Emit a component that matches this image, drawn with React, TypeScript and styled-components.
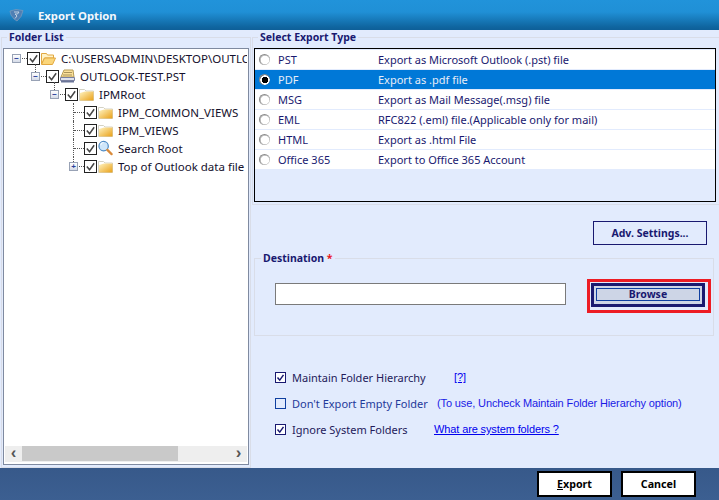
import * as React from "react";
import styled, { createGlobalStyle } from "styled-components";

const ui = `"Noto Sans", "Liberation Sans", sans-serif`;
const link = `"Liberation Sans", sans-serif`;

const GlobalStyle = createGlobalStyle`
  html, body { margin: 0; padding: 0; background: #e2ebfd; }
  body { font-family: ${ui}; font-size: 11px; }
`;

type TreeItem = {
  label: string;
  depth: number;
  icon: "open" | "pst" | "folder" | "search";
  expander?: "minus" | "plus";
  guide?: "stub" | "full" | "half";
};

const treeItems: TreeItem[] = [
  { label: "C:\\USERS\\ADMIN\\DESKTOP\\OUTLOOK-TEST", depth: 0, icon: "open", expander: "minus" },
  { label: "OUTLOOK-TEST.PST", depth: 1, icon: "pst", expander: "minus", guide: "stub" },
  { label: "IPMRoot", depth: 2, icon: "folder", expander: "minus", guide: "stub" },
  { label: "IPM_COMMON_VIEWS", depth: 3, icon: "folder", guide: "full" },
  { label: "IPM_VIEWS", depth: 3, icon: "folder", guide: "full" },
  { label: "Search Root", depth: 3, icon: "search", guide: "full" },
  { label: "Top of Outlook data file", depth: 3, icon: "folder", expander: "plus", guide: "half" },
];

const exportTypes = [
  { name: "PST", desc: "Export as Microsoft Outlook (.pst) file" },
  { name: "PDF", desc: "Export as .pdf file", selected: true },
  { name: "MSG", desc: "Export as Mail Message(.msg) file" },
  { name: "EML", desc: "RFC822 (.eml) file.(Applicable only for mail)" },
  { name: "HTML", desc: "Export as .html File" },
  { name: "Office 365", desc: "Export to Office 365 Account" },
];

const FolderIcon = ({ open }: { open?: boolean }) => (
  <svg width="15" height="13" viewBox="0 0 15 13">
    <defs>
      <linearGradient id="folderFill" x1="0" y1="0" x2="1" y2="1">
        <stop offset="0" stopColor="#fff3c0" />
        <stop offset="1" stopColor="#e9a017" />
      </linearGradient>
    </defs>
    {open ? (
      <>
        <path d="M.5 1.500h5l1 1.500h6v3h-9l-3 6z" fill="#fff3c8" stroke="#e2a840" />
        <path d="M.5 12.500l3-6.500h11l-3 6.500z" fill="#fbd67a" stroke="#e2a840" />
      </>
    ) : (
      <>
        <path d="M.5 1.500h5l1.500 1.500h7.500v9.500h-14z" fill="#fff" stroke="#d4d2c4" />
        <path d="M1 5l5-1.500h8.500v9h-13.500z" fill="url(#folderFill)" />
      </>
    )}
  </svg>
);

const PstIcon = () => (
  <svg width="15" height="16" viewBox="0 0 15 16">
    <path d="M1 9l3-7h9l1 7z" fill="#fbe09a" stroke="#b59a55" />
    <path d="M4 4.500h8M3 7h9" stroke="#a8925a" />
    <path d="M.5 9.500h14v3h-14z" fill="#dfe2ec" stroke="#7a80a0" />
    <path d="M1 13h13v1.500h-13z" fill="#6a7598" />
  </svg>
);

const SearchIcon = () => (
  <svg width="16" height="16" viewBox="0 0 16 16">
    <circle cx="6" cy="6" r="5" fill="#cfe6fa" stroke="#4d8ac4" strokeWidth="1.300" />
    <path d="M3 5a3 3 0 0 1 3-3" stroke="#fff" fill="none" />
    <path d="M10 10l4.500 4.500" stroke="#d98a3a" strokeWidth="2.400" strokeLinecap="round" />
  </svg>
);

const TreeIcon = ({ kind }: { kind: TreeItem["icon"] }) => {
  if (kind === "pst") return <PstIcon />;
  if (kind === "search") return <SearchIcon />;
  return <FolderIcon open={kind === "open"} />;
};

const CheckMark = ({ size, color, weight }: { size: number; color: string; weight: number }) => (
  <svg width={size} height={size} viewBox="0 0 12 12">
    <path d="M2 6l3 3.500 5-7" fill="none" stroke={color} strokeWidth={weight} />
  </svg>
);

const AppLogo = () => (
  <svg width="15" height="13" viewBox="0 0 15 13">
    <path d="M1 2l6-1.500 7 1-2 6-4 4.500-3-2-3-4z" fill="#4f7fb4" stroke="#7f9cbc" strokeWidth=".7" />
    <path d="M5 3h5l-1.500 2h-2.500l2 2-2 2.500" fill="none" stroke="#c3d2e2" strokeWidth="1" />
  </svg>
);

const App = () => (
  <Window>
    <GlobalStyle />
    <TitleBar>
      <AppLogo />
      <TitleText>Export Option</TitleText>
    </TitleBar>
    <Main>
      <FolderPanel>
        <InsetLegend>Folder List</InsetLegend>
        <TreeFrame>
          <Tree>
            {treeItems.map((item) => (
              <TreeRow key={item.label} $depth={item.depth}>
                <ExpanderSlot $guide={item.guide}>
                  {item.expander && (
                    <Expander>
                      <ExpanderGlyph>{item.expander === "plus" ? "+" : "−"}</ExpanderGlyph>
                    </Expander>
                  )}
                </ExpanderSlot>
                <TreeCheck>
                  <CheckMark size={11} color="#444" weight={1.6} />
                </TreeCheck>
                <TreeIconSlot>
                  <TreeIcon kind={item.icon} />
                </TreeIconSlot>
                <TreeLabel>{item.label}</TreeLabel>
              </TreeRow>
            ))}
          </Tree>
          <ScrollBar>
            <ScrollArrow>‹</ScrollArrow>
            <ScrollTrack>
              <ScrollThumb />
            </ScrollTrack>
            <ScrollArrow>›</ScrollArrow>
          </ScrollBar>
        </TreeFrame>
      </FolderPanel>
      <RightColumn>
        <TypePanel>
          <InsetLegend>Select Export Type</InsetLegend>
          <TypeList>
            {exportTypes.map((type) => (
              <TypeRow key={type.name} $selected={type.selected}>
                <Radio $selected={type.selected} />
                <TypeName>{type.name}</TypeName>
                <span>{type.desc}</span>
              </TypeRow>
            ))}
          </TypeList>
        </TypePanel>
        <AdvRow>
          <AdvButton>Adv. Settings...</AdvButton>
        </AdvRow>
        <DestinationPanel>
          <PanelLegend>
            Destination <Required>*</Required>
          </PanelLegend>
          <DestinationRow>
            <PathInput readOnly />
            <BrowseHighlight>
              <BrowseButton>
                <BrowseInner>Browse</BrowseInner>
              </BrowseButton>
            </BrowseHighlight>
          </DestinationRow>
        </DestinationPanel>
        <Options>
          <OptionRow>
            <OptionBox $checked>
              <CheckMark size={9} color="#191970" weight={2} />
            </OptionBox>
            <OptionLabel $width={162}>Maintain Folder Hierarchy</OptionLabel>
            <HelpLink>[?]</HelpLink>
          </OptionRow>
          <OptionRow>
            <OptionBox />
            <OptionLabel $width={145} $muted>Don't Export Empty Folder</OptionLabel>
            <Hint>(To use, Uncheck Maintain Folder Hierarchy option)</Hint>
          </OptionRow>
          <OptionRow>
            <OptionBox $checked>
              <CheckMark size={9} color="#191970" weight={2} />
            </OptionBox>
            <OptionLabel $width={142}>Ignore System Folders</OptionLabel>
            <HelpLink>What are system folders ?</HelpLink>
          </OptionRow>
        </Options>
      </RightColumn>
    </Main>
    <Footer>
      <FooterButton>
        <u>E</u>xport
      </FooterButton>
      <FooterButton>Cancel</FooterButton>
    </Footer>
  </Window>
);

const Window = styled.div`
  width: 719px;
  height: 500px;
  display: flex;
  flex-direction: column;
  overflow: hidden;
  background: #e2ebfd;
  color: #191970;
`;

const TitleBar = styled.header`
  height: 30px;
  flex: none;
  display: flex;
  align-items: center;
  gap: 14px;
  padding-left: 9px;
  background: linear-gradient(#2193da 0%, #2090d6 40%, #0f659f 90%, #0e5f98 100%);
`;

const TitleText = styled.h1`
  margin: 0;
  font: 700 11.3px ${ui};
  color: #f2f8fd;
`;

const Main = styled.main`
  flex: 1;
  min-height: 0;
  display: flex;
  padding-left: 1px;
  gap: 1px;
`;

const Panel = styled.fieldset`
  margin: 0;
  padding: 0;
  min-width: 0;
  box-sizing: border-box;
  border: 1px solid #d9dde8;
`;

const PanelLegend = styled.legend`
  margin-left: 6px;
  padding: 0 2px;
  font: 700 10.5px/14px ${ui};
  color: #191970;
`;

const InsetLegend = styled(PanelLegend)`
  margin-left: 4px;
`;

const FolderPanel = styled(Panel)`
  width: 250px;
  flex: none;
  padding: 4px 1px 2px;
`;

const TreeFrame = styled.div`
  height: 417px;
  box-sizing: border-box;
  display: flex;
  flex-direction: column;
  border: 1px solid #7f8aa0;
  background: #fff;
  padding: 0 1px 2px;
`;

const Tree = styled.div`
  flex: 1;
  min-height: 0;
  overflow: hidden;
  padding-left: 7px;
`;

const TreeRow = styled.div<{ $depth: number }>`
  height: 18px;
  display: flex;
  align-items: center;
  padding-left: ${(p) => p.$depth * 19}px;
  white-space: nowrap;
`;

const guideHeights = { stub: "top: -3px; height: 12px;", full: "top: 0; height: 18px;", half: "top: 0; height: 9px;" };

const ExpanderSlot = styled.span<{ $guide?: "stub" | "full" | "half" }>`
  position: relative;
  width: 15px;
  height: 18px;
  flex: none;
  display: flex;
  align-items: center;

  &::before {
    content: "";
    position: absolute;
    left: 4px;
    border-left: 1px dotted #555;
    ${(p) => (p.$guide ? guideHeights[p.$guide] : "display: none;")}
  }

  &::after {
    content: "";
    position: absolute;
    left: 5px;
    right: 0;
    top: 9px;
    border-top: 1px dotted #555;
  }
`;

const Expander = styled.span`
  position: relative;
  z-index: 1;
  width: 9px;
  height: 9px;
  box-sizing: border-box;
  margin-top: 1px;
  border: 1px solid #98a2b5;
  background: linear-gradient(#fff, #d5dbe8);
  display: flex;
  align-items: center;
  justify-content: center;
`;

const ExpanderGlyph = styled.span`
  font: 700 8px/7px ${link};
  color: #2a3f9a;
`;

const TreeCheck = styled.span`
  width: 13px;
  height: 13px;
  box-sizing: border-box;
  flex: none;
  border: 1px solid #222;
  background: #fff;
  display: flex;
  align-items: center;
  justify-content: center;
`;

const TreeIconSlot = styled.span`
  width: 15px;
  height: 16px;
  margin-left: 1px;
  flex: none;
  display: flex;
  align-items: center;
`;

const TreeLabel = styled.span`
  margin-left: 5px;
  font: 400 11.5px ${ui};
  color: #14102c;
`;

const ScrollBar = styled.div`
  height: 16px;
  flex: none;
  display: flex;
  background: #eeeeee;
`;

const ScrollArrow = styled.span`
  width: 17px;
  flex: none;
  text-align: center;
  font: 700 17px/13px ${link};
  color: #555;
`;

const ScrollTrack = styled.div`
  flex: 1;
`;

const ScrollThumb = styled.div`
  width: 156px;
  height: 15px;
  background: #c9c9c9;
`;

const RightColumn = styled.div`
  flex: 1;
  min-width: 0;
  display: flex;
  flex-direction: column;
`;

const TypePanel = styled(Panel)`
  padding: 4px 1px 2px;
  margin-right: -3px;
`;

const TypeList = styled.div`
  height: 154px;
  box-sizing: border-box;
  width: 462px;
  border: 1px solid #000;
  padding-top: 1px;
`;

const TypeRow = styled.div<{ $selected?: boolean }>`
  height: 19px;
  margin-bottom: 1px;
  display: flex;
  align-items: center;
  padding-left: 4px;
  background: ${(p) => (p.$selected ? "#0078d7" : "#fff")};
  color: ${(p) => (p.$selected ? "#e8edf8" : "#191970")};
`;

const Radio = styled.span<{ $selected?: boolean }>`
  width: 11px;
  height: 11px;
  box-sizing: border-box;
  border-radius: 50%;
  flex: none;
  background: ${(p) =>
    p.$selected
      ? "radial-gradient(circle, #000 0 3px, #fff 3.5px 4.5px, #777 5px)"
      : "radial-gradient(circle, #fff 0 4px, #c4c4c4 4.5px)"};
  border-top: 1px solid #8a8a8a;
  border-left: 1px solid #8a8a8a;
`;

const TypeName = styled.span`
  width: 100px;
  margin-left: 8px;
  flex: none;
`;

const AdvRow = styled.div`
  display: flex;
  justify-content: flex-end;
  padding: 16px 12px 6px 0;
`;

const AdvButton = styled.button`
  width: 114px;
  height: 24px;
  padding: 0;
  border: 1px solid #191970;
  background: #e2ebfd;
  font: 700 10.5px ${ui};
  color: #191970;
`;

const DestinationPanel = styled(Panel)`
  margin-left: 2px;
  width: 460px;
  height: 85px;
`;

const Required = styled.span`
  color: #e8141c;
`;

const DestinationRow = styled.div`
  display: flex;
  align-items: flex-start;
  padding: 14px 0 0 20px;
`;

const PathInput = styled.input`
  width: 291px;
  height: 22px;
  box-sizing: border-box;
  margin-top: 4px;
  padding: 0;
  border: 1px solid #7a7a7a;
  background: #fff;
  outline: none;
`;

const BrowseHighlight = styled.div`
  margin-left: 21px;
  width: 124px;
  height: 34px;
  box-sizing: border-box;
  border: 3px solid #ed1c24;
  padding: 1px;
`;

const BrowseButton = styled.button`
  width: 114px;
  height: 24px;
  box-sizing: border-box;
  padding: 2px 2px 3px;
  border: 3px solid #1a1a70;
  background: #cdd5e6;
  display: block;
`;

const BrowseInner = styled.span`
  display: block;
  height: 13px;
  box-sizing: border-box;
  border: 1px solid #0f3fa0;
  font: 700 10.5px/11px ${ui};
  color: #191970;
`;

const Options = styled.div`
  padding: 32px 0 0 23px;
  display: flex;
  flex-direction: column;
  gap: 8px;
`;

const OptionRow = styled.div`
  height: 18px;
  display: flex;
  align-items: center;
`;

const OptionBox = styled.span<{ $checked?: boolean }>`
  width: 11px;
  height: 11px;
  box-sizing: border-box;
  flex: none;
  border: 1px solid ${(p) => (p.$checked ? "#191970" : "#0f3fa0")};
  background: ${(p) => (p.$checked ? "#fff" : "transparent")};
  display: flex;
  align-items: center;
  justify-content: center;
`;

const OptionLabel = styled.span<{ $width: number; $muted?: boolean }>`
  width: ${(p) => p.$width}px;
  margin-left: 6px;
  flex: none;
  white-space: nowrap;
  color: ${(p) => (p.$muted ? "#1f3a9a" : "#241a5a")};
`;

const HelpLink = styled.a`
  font: 400 11px ${link};
  letter-spacing: -0.12px;
  color: #0000ee;
  text-decoration: underline;
`;

const Hint = styled.span`
  font: 400 11px ${link};
  letter-spacing: -0.12px;
  color: #1a1ae6;
`;

const Footer = styled.footer`
  height: 32px;
  flex: none;
  display: flex;
  justify-content: flex-end;
  align-items: center;
  gap: 9px;
  padding-right: 23px;
  background: linear-gradient(#37598a, #3c5f91);
`;

const FooterButton = styled.button`
  width: 75px;
  height: 26px;
  padding: 0;
  border: 2px solid #000;
  background: #fff;
  font: 700 10.7px ${ui};
  color: #000;
`;

export default App;
